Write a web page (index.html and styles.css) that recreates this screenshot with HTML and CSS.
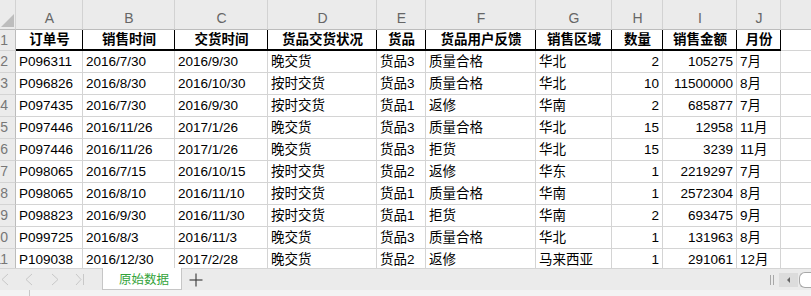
FILE: index.html
```html
<!DOCTYPE html>
<html lang="zh-CN">
<head>
  <meta charset="UTF-8" />
  <title>原始数据</title>
  <link rel="stylesheet" href="styles.css">
</head>
<body>
  <div id="sheet" class="sheet"></div>

  <div class="tabbar">
    <svg class="nav" width="102" height="21" viewBox="0 0 102 21">
      <polyline points="8,5 2,10.5 8,16" />
      <polyline points="32,5 26,10.5 32,16" />
      <polyline points="52,5 58,10.5 52,16" />
      <polyline points="76,5 81,10.5 76,16" />
      <line x1="83.5" y1="5" x2="83.5" y2="16" />
    </svg>
    <div class="tab">原始数据</div>
    <svg class="add" width="14" height="14" viewBox="0 0 14 14">
      <line x1="7" y1="0.5" x2="7" y2="13.5" />
      <line x1="0.5" y1="7" x2="13.5" y2="7" />
    </svg>
    <div class="spacer"></div>
    <div class="grip"></div>
    <div class="scroll-btn"><span class="arrow-left"></span></div>
    <div class="thumb"></div>
  </div>
  <div class="status"><div class="status-left"></div></div>

  <script>
    const sheet = document.getElementById('sheet');
    const letters = ['', 'A', 'B', 'C', 'D', 'E', 'F', 'G', 'H', 'I', 'J', ''];
    const titles = ['订单号', '销售时间', '交货时间', '货品交货状况', '货品', '货品用户反馈', '销售区域', '数量', '销售金额', '月份'];
    const rows = [
      ['P096311', '2016/7/30', '2016/9/30', '晚交货', '货品3', '质量合格', '华北', '2', '105275', '7月'],
      ['P096826', '2016/8/30', '2016/10/30', '按时交货', '货品3', '质量合格', '华北', '10', '11500000', '8月'],
      ['P097435', '2016/7/30', '2016/9/30', '按时交货', '货品1', '返修', '华南', '2', '685877', '7月'],
      ['P097446', '2016/11/26', '2017/1/26', '晚交货', '货品3', '质量合格', '华北', '15', '12958', '11月'],
      ['P097446', '2016/11/26', '2017/1/26', '晚交货', '货品3', '拒货', '华北', '15', '3239', '11月'],
      ['P098065', '2016/7/15', '2016/10/15', '按时交货', '货品2', '返修', '华东', '1', '2219297', '7月'],
      ['P098065', '2016/8/10', '2016/11/10', '按时交货', '货品1', '质量合格', '华南', '1', '2572304', '8月'],
      ['P098823', '2016/9/30', '2016/11/30', '按时交货', '货品1', '拒货', '华南', '2', '693475', '9月'],
      ['P099725', '2016/8/3', '2016/11/3', '晚交货', '货品3', '质量合格', '华北', '1', '131963', '8月'],
      ['P109038', '2016/12/30', '2017/2/28', '晚交货', '货品2', '返修', '马来西亚', '1', '291061', '12月']
    ];

    function addCell(text, cls) {
      const div = document.createElement('div');
      div.className = 'cell ' + cls;
      div.textContent = text;
      sheet.appendChild(div);
      return div;
    }

    function addRowHead(num) {
      const div = addCell('', 'rowhead');
      const span = document.createElement('span');
      span.textContent = num;
      div.appendChild(span);
    }

    // column letters
    letters.forEach((l, i) => {
      const c = addCell(l, i === 0 ? 'colhead corner' : 'colhead');
      if (i === 0) {
        c.innerHTML = '<svg width="13" height="13" viewBox="0 0 13 13"><polygon points="13,0 13,13 0,13" fill="#bdbdbd"/></svg>';
      }
    });

    // header row
    addRowHead(1);
    titles.forEach(t => addCell(t, 'head'));
    addCell('', '');

    // data rows
    rows.forEach((r, n) => {
      addRowHead(n + 2);
      r.forEach((v, i) => addCell(v, i === 7 || i === 8 ? 'num' : ''));
      addCell('', '');
    });
  </script>
</body>
</html>
```

FILE: styles.css
```css
body {
  margin: 0;
  width: 811px;
  height: 296px;
  overflow: hidden;
  background: #fff;
  font-family: "Liberation Sans", "Noto Sans CJK SC", sans-serif;
  font-size: 13.5px;
}

.sheet {
  display: grid;
  grid-template-columns: 16px 67px 92px 93px 109px 49px 110px 76px 51px 74px 44px 60px;
  grid-template-rows: 30px 21px repeat(10, 22px);
  width: 811px;
  height: 268px;
  overflow: hidden;
}

.cell {
  box-sizing: border-box;
  border-right: 1px solid #d4d4d4;
  border-bottom: 1px solid #d4d4d4;
  padding: 0 2px 0 3px;
  line-height: 21px;
  white-space: nowrap;
  overflow: hidden;
  color: #000;
}

.num {
  text-align: right;
  padding-right: 3px;
}

.head {
  font-weight: bold;
  text-align: center;
  line-height: 19px;
  border-right-color: #000;
  border-bottom: 2px solid #000;
}

.colhead {
  background: #ebebeb;
  color: #666;
  font-size: 14px;
  text-align: center;
  padding-top: 8px;
  border-right-color: #d2d2d2;
  border-bottom-color: #bcbcbc;
}

.corner {
  display: flex;
  align-items: flex-end;
  justify-content: flex-end;
  padding: 0 1px 2px 0;
}

.corner svg {
  display: block;
}

.rowhead {
  background: #ebebeb;
  color: #777;
  font-size: 14px;
  padding: 0;
  border-right-color: #bcbcbc;
}

.rowhead span {
  display: block;
  width: 30px;
  margin-left: -22px;
  text-align: right;
}

.tabbar {
  display: flex;
  align-items: center;
  box-sizing: border-box;
  height: 22px;
  background: #ebebeb;
  border-top: 1px solid #d4d4d4;
}

.nav {
  display: block;
  flex: none;
}

.nav polyline,
.nav line {
  fill: none;
  stroke: #c8c8c8;
  stroke-width: 1;
}

.tab {
  box-sizing: border-box;
  align-self: stretch;
  width: 80px;
  margin-top: -1px;
  padding-left: 4px;
  display: flex;
  align-items: center;
  justify-content: center;
  background: #fff;
  border-left: 1px solid #c6c6c6;
  border-right: 1px solid #c6c6c6;
  border-bottom: 1px solid #c6c6c6;
  color: #33a33a;
  font-size: 12.5px;
}

.add {
  display: block;
  margin-left: 7px;
}

.add line {
  stroke: #444;
  stroke-width: 1.2;
}

.spacer {
  flex: 1;
}

.grip {
  width: 2px;
  height: 10px;
  border-left: 1px solid #a8a8a8;
  border-right: 1px solid #a8a8a8;
  margin-right: 5px;
}

.scroll-btn {
  width: 19px;
  height: 14px;
  background: #dcdcdc;
  display: flex;
  align-items: center;
  justify-content: center;
}

.arrow-left {
  width: 0;
  height: 0;
  border-top: 3px solid transparent;
  border-bottom: 3px solid transparent;
  border-right: 3px solid #666;
}

.thumb {
  box-sizing: border-box;
  width: 12px;
  height: 16px;
  margin-left: 1px;
  background: #fff;
  border: 1px solid #a8a8a8;
  border-right: none;
  border-radius: 6px 0 0 6px;
}

.status {
  height: 6px;
  background: #f3f3f3;
}

.status-left {
  width: 30px;
  height: 6px;
  box-sizing: border-box;
  border-right: 1px solid #c8c8c8;
}
```
